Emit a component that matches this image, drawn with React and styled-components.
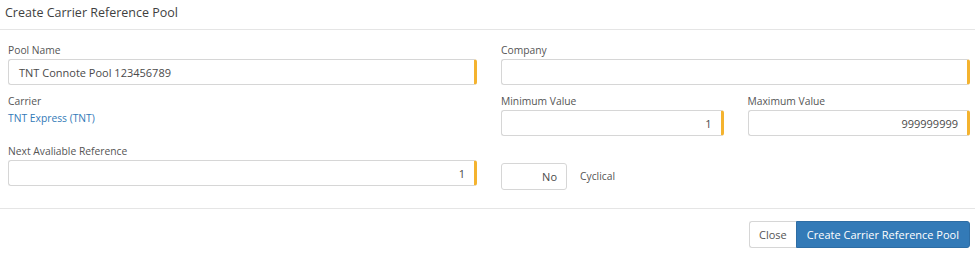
import React from "react";
import styled, { createGlobalStyle } from "styled-components";

const GlobalStyle = createGlobalStyle`
  html, body {
    margin: 0;
    padding: 0;
    background: #fff;
  }
  body {
    font-family: "Open Sans", "Liberation Sans", sans-serif;
    color: #333;
  }
`;

const Modal = styled.div`
  width: 975px;
  height: 259px;
  background: #fff;
  display: flex;
  flex-direction: column;
`;

const Header = styled.div`
  height: 30px;
  box-sizing: border-box;
  border-bottom: 1px solid #e5e5e5;
  padding: 0 5px;
  display: flex;
  align-items: center;
`;

const Title = styled.h4`
  margin: 0 0 4px;
  font-size: 12.5px;
  font-weight: 400;
  color: #3f3f3f;
`;

const Body = styled.div`
  display: grid;
  grid-template-columns: 469px 469px;
  column-gap: 24px;
  padding: 12px 5px 0 8px;
  height: 179px;
  box-sizing: border-box;
  border-bottom: 1px solid #e5e5e5;
`;

const Column = styled.div`
  display: flex;
  flex-direction: column;
`;

const Pair = styled.div`
  display: grid;
  grid-template-columns: 1fr 1fr;
  column-gap: 24px;
`;

const Group = styled.div`
  display: flex;
  flex-direction: column;
  margin-bottom: ${(p) => p.$mb || 8}px;
`;

const Label = styled.label`
  font-size: 10.3px;
  line-height: 16px;
  color: #555;
  margin-bottom: 1px;
`;

const Link = styled.a`
  font-size: 10.3px;
  line-height: 16px;
  color: #337ab7;
  text-decoration: none;
`;

const Input = styled.div`
  height: 26px;
  box-sizing: border-box;
  border: 1px solid #d6d6d6;
  border-right: 3px solid #f4b32f;
  border-radius: 3px;
  padding: 0 9px 0 10px;
  display: flex;
  align-items: center;
  justify-content: ${(p) => (p.$right ? "flex-end" : "flex-start")};
  font-size: 11px;
  color: #4a4a4a;
`;

const ToggleRow = styled.div`
  display: flex;
  align-items: center;
  margin-top: 19px;
`;

const Toggle = styled.div`
  width: 66px;
  height: 27px;
  box-sizing: border-box;
  border: 1px solid #d6d6d6;
  border-radius: 3px;
  display: flex;
  align-items: center;
  justify-content: flex-end;
  padding-right: 9px;
  font-size: 11px;
  color: #4a4a4a;
`;

const ToggleText = styled.span`
  margin-left: 13px;
  margin-bottom: 2px;
  font-size: 10.3px;
  color: #555;
`;

const Footer = styled.div`
  display: flex;
  justify-content: flex-end;
  padding: 12px 5px 0 0;
`;

const Button = styled.button`
  height: 27px;
  box-sizing: border-box;
  font-family: "Open Sans", "Liberation Sans", sans-serif;
  font-size: 11px;
  padding: 0 ${(p) => (p.$primary ? 10 : 9)}px;
  border: 1px solid ${(p) => (p.$primary ? "#2e6da4" : "#d6d6d6")};
  background: ${(p) => (p.$primary ? "#337ab7" : "#fff")};
  color: ${(p) => (p.$primary ? "#fff" : "#555")};
  border-radius: ${(p) => (p.$primary ? "0 3px 3px 0" : "3px 0 0 3px")};
  ${(p) => (p.$primary ? "" : "border-right: none;")}
`;

export default function App() {
  return (
    <Modal>
      <GlobalStyle />
      <Header>
        <Title>Create Carrier Reference Pool</Title>
      </Header>
      <Body>
        <Column>
          <Group>
            <Label>Pool Name</Label>
            <Input>TNT Connote Pool 123456789</Input>
          </Group>
          <Group $mb={17}>
            <Label>Carrier</Label>
            <Link href="#">TNT Express (TNT)</Link>
          </Group>
          <Group>
            <Label>Next Avaliable Reference</Label>
            <Input $right>1</Input>
          </Group>
        </Column>
        <Column>
          <Group>
            <Label>Company</Label>
            <Input />
          </Group>
          <Pair>
            <Group $mb={0}>
              <Label>Minimum Value</Label>
              <Input $right>1</Input>
            </Group>
            <Group $mb={0}>
              <Label>Maximum Value</Label>
              <Input $right>999999999</Input>
            </Group>
          </Pair>
          <ToggleRow>
            <Toggle>No</Toggle>
            <ToggleText>Cyclical</ToggleText>
          </ToggleRow>
        </Column>
      </Body>
      <Footer>
        <Button>Close</Button>
        <Button $primary>Create Carrier Reference Pool</Button>
      </Footer>
    </Modal>
  );
}
